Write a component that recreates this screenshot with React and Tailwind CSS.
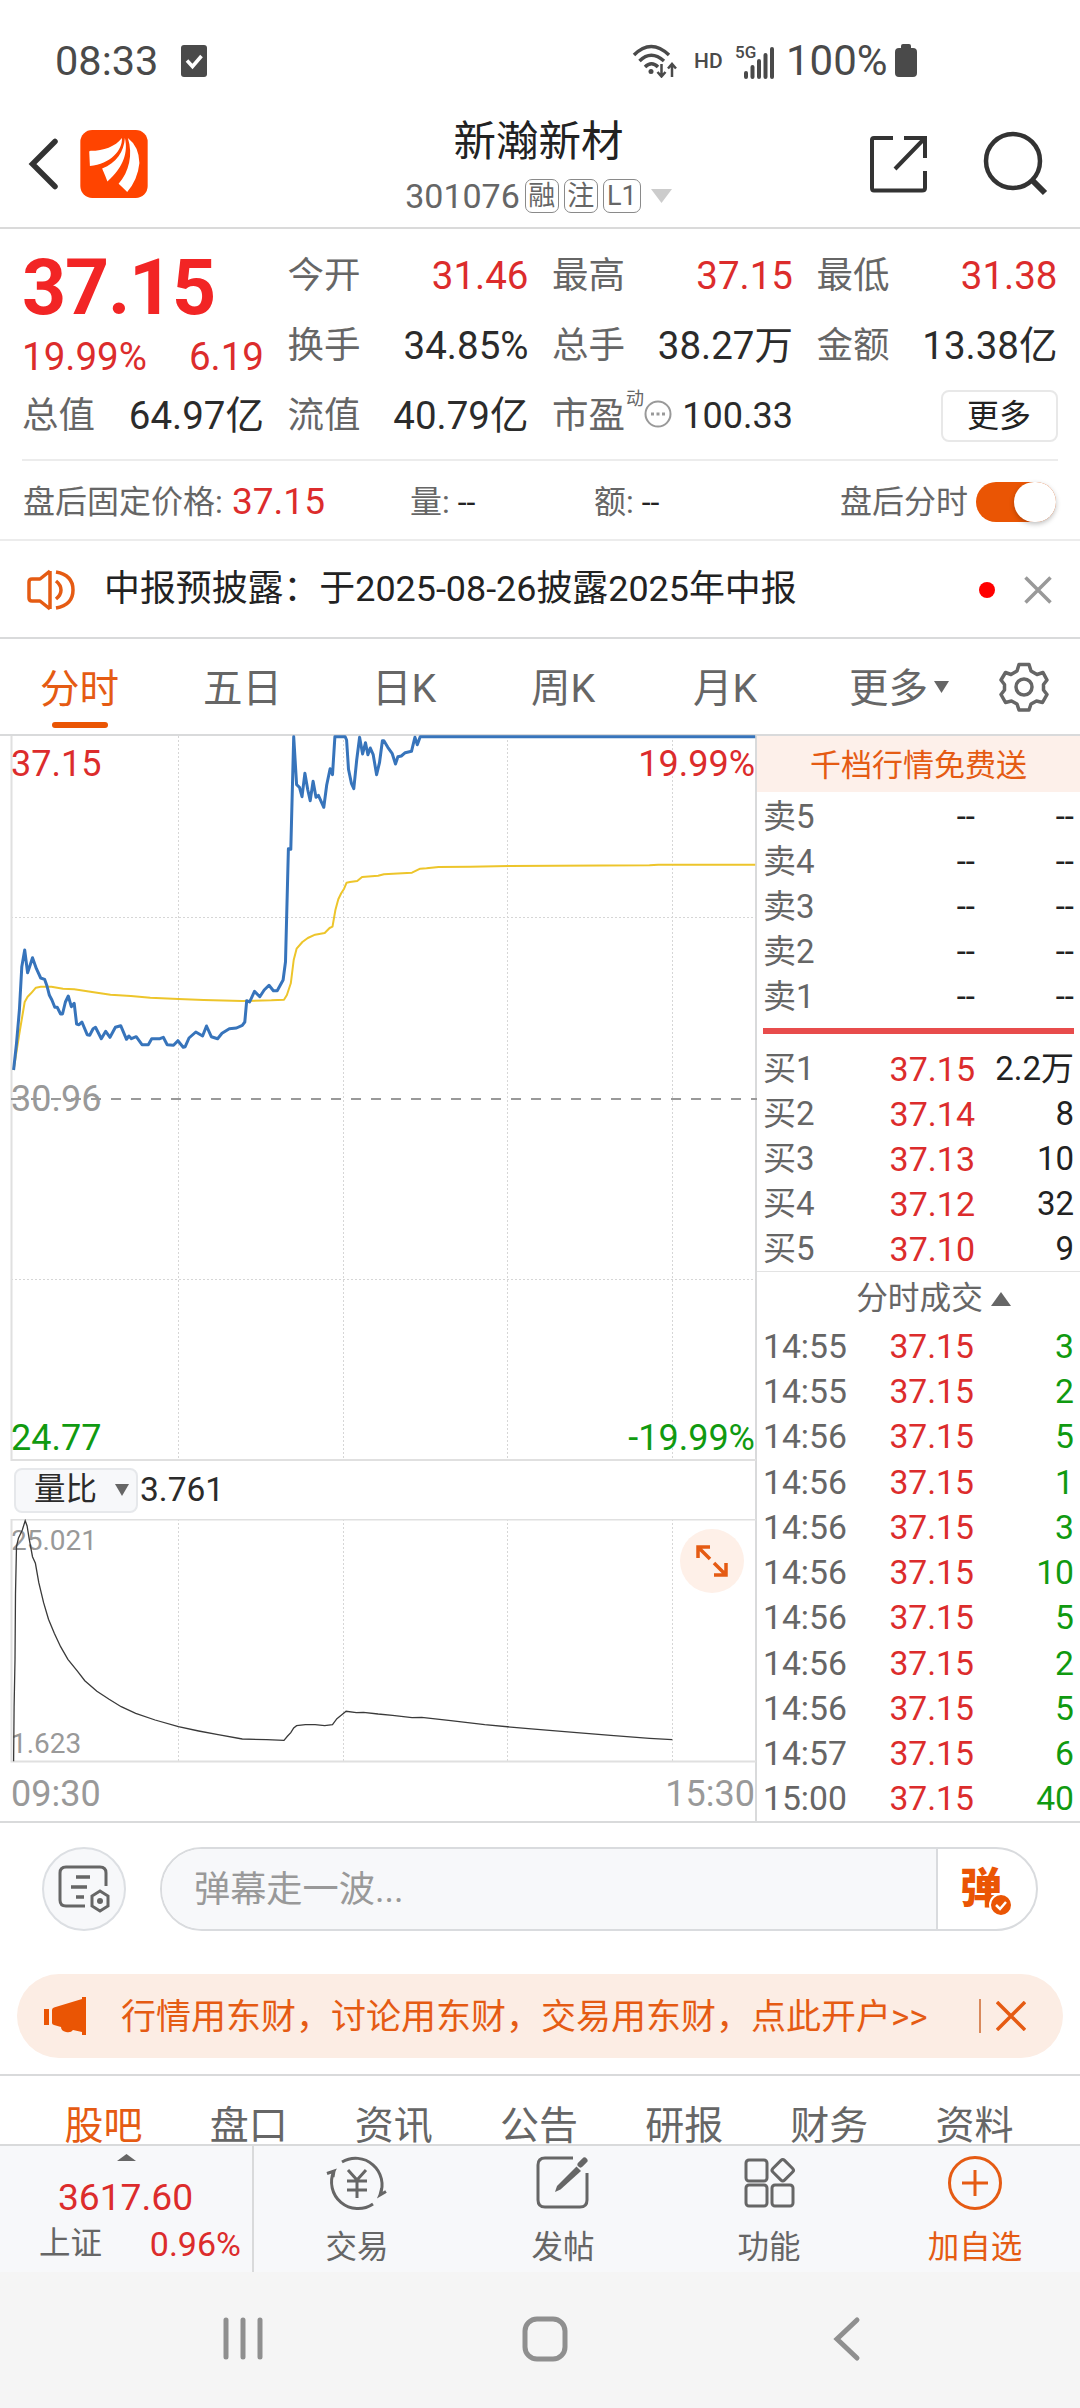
import React from "react";

const price = [
  [28,1020],[34,940],[40,840],[45,710],[51,660],[57,728],[62,706],[67,683],[75,716],[84,744],[92,748],[97,768],[102,796],[107,810],[113,832],[118,832],[125,852],[129,852],[135,816],[141,798],[147,830],[153,820],[158,882],[163,884],[169,876],[180,914],[185,916],[192,896],[197,892],[209,926],[218,904],[227,922],[238,892],[249,887],[261,928],[266,918],[271,926],[281,920],[293,944],[306,944],[313,926],[330,926],[337,922],[345,944],[358,946],[367,932],[378,952],[382,950],[390,924],[404,906],[418,918],[426,888],[436,920],[449,926],[458,910],[473,896],[488,894],[500,886],[505,876],[509,812],[515,816],[525,784],[536,800],[545,780],[555,766],[564,782],[572,782],[584,750],[589,695],[595,356],[600,358],[606,20],[612,164],[618,172],[623,200],[629,130],[635,180],[640,212],[646,154],[652,202],[657,196],[668,232],[674,165],[681,116],[686,134],[691,20],[712,20],[715,30],[719,118],[725,160],[730,176],[736,90],[742,22],[748,72],[754,38],[759,74],[764,54],[770,74],[777,134],[783,98],[789,32],[792,32],[800,52],[809,70],[816,102],[821,80],[828,78],[836,68],[849,64],[856,22],[861,44],[867,20],[1558,20],
];
const average = [
  [28,1020],[40,910],[51,816],[57,800],[64,790],[74,773],[84,770],[106,770],[130,776],[153,778],[190,786],[228,794],[270,798],[310,803],[368,807],[420,810],[500,813],[560,811],[586,809],[592,795],[600,760],[606,690],[612,656],[624,636],[635,624],[650,614],[670,609],[680,594],[686,590],[692,540],[698,508],[704,490],[710,476],[715,458],[722,456],[737,453],[747,441],[780,437],[792,433],[830,430],[850,428],[867,416],[880,415],[905,411],[970,410],[1050,408],[1340,406],[1358,404],[1558,404],
];
const ratio = [
  [28,1024],[29,860],[31,720],[32,520],[34,380],[38,355],[46,330],[52,302],[56,318],[60,355],[67,410],[73,430],[80,488],[90,548],[100,598],[112,640],[125,680],[140,718],[160,754],[175,782],[200,814],[225,838],[250,860],[280,880],[320,900],[368,920],[410,933],[450,944],[500,957],[550,959],[586,961],[593,949],[600,938],[606,924],[612,917],[630,914],[650,914],[670,917],[686,914],[695,896],[704,886],[714,874],[735,878],[750,877],[780,882],[810,886],[850,893],[870,892],[930,902],[1000,914],[1090,926],[1190,938],[1260,946],[1340,955],[1387,959],
];
const KX = 760 / 1568;
const toPoints = (list, dy) =>
  list.map(([x, y]) => `${(x * KX).toFixed(1)},${(y / 3 + dy).toFixed(1)}`).join(" ");

const Tri = ({ w, h, up, color }) => (
  <svg width={w} height={h} viewBox="0 0 20 20" preserveAspectRatio="none" className="shrink-0">
    <path d={up ? "M0 20L10 0L20 20Z" : "M0 0L20 0L10 20Z"} fill={color} />
  </svg>
);

function StatusBar() {
  return (
    <div className="flex h-[103px] shrink-0 items-center pt-[19px] pl-[55px] text-[#4a4a4a]">
      <span className="w-[126px] text-[41.500px] leading-none">08:33</span>
      <svg width="26" height="32" viewBox="0 0 26 32">
        <rect width="26" height="32" rx="3" fill="#4a4a4a" />
        <path d="M6 15.500l5.500 6L20.500 11" fill="none" stroke="#fff" strokeWidth="3.500" />
      </svg>
      <svg width="46" height="34" viewBox="0 0 46 34" className="ml-[425px]" fill="none" stroke="#4a4a4a">
        <path d="M2 11Q19-6 37 11" strokeWidth="3.500" />
        <path d="M7.500 17Q19 5.500 32 17" strokeWidth="3.500" />
        <path d="M13 23Q19.500 16.500 26 23" strokeWidth="3.500" />
        <circle cx="19" cy="27.500" r="2.500" fill="#4a4a4a" stroke="none" />
        <path d="M29.500 20V32M25.500 28l4 4.500 4-4.500M40 33V20M36 24.500l4-4.500 4 4.500" strokeWidth="2.500" />
      </svg>
      <span className="ml-[16px] w-[42px] text-[21px] font-medium leading-none">HD</span>
      <svg width="40" height="34" viewBox="0 0 40 34" className="overflow-visible">
        <text x="-1" y="14" fontSize="17" fontWeight="500" fill="#4a4a4a" fontFamily="Roboto, sans-serif">5G</text>
        <path d="M10 29v4M16.500 23v10M23 17v16M29.500 11v22M36 5v28" stroke="#4a4a4a" strokeWidth="4" strokeLinecap="round" />
      </svg>
      <span className="ml-[10px] text-[42px] leading-none">100%</span>
      <svg width="24" height="34" viewBox="0 0 24 34" className="ml-[6px]">
        <path d="M7 4V2q0-2 2-2h6q2 0 2 2v2h2q4 0 4 4v21q0 4-4 4H5q-4 0-4-4V8q0-4 4-4z" fill="#4a4a4a" />
      </svg>
    </div>
  );
}

const Badge = ({ children, wide }) => (
  <span className={(wide ? "w-[38px]" : "w-[34px]") + " flex h-[34px] items-center justify-center rounded-[7px] border border-[#8a8a8a] text-[27px] leading-none"}>
    {children}
  </span>
);

function Header() {
  return (
    <div className="flex h-[126px] shrink-0 items-start justify-between border-b-2 border-[#dadada] pr-[31px] pl-[28px]">
      <div className="flex w-[340px] pt-[27px]">
        <svg width="30" height="68" viewBox="0 0 30 68">
          <path d="M27 11.500L4.500 34L27 56.500" fill="none" stroke="#333" strokeWidth="5.500" strokeLinecap="round" />
        </svg>
        <svg width="68" height="68" viewBox="180 30 204 206" className="ml-[22px]">
          <rect x="180" y="30" width="204" height="206" rx="36" fill="#ff4400" />
          <path d="M306 54C308 92 272 132 209 139L207 96Q207 93 212 93C250 93 286 80 306 54Z" fill="#fff" />
          <path d="M315 54C325 96 312 142 262 186Q256 170 246 147C290 128 312 96 315 54Z" fill="#fff" />
          <path d="M324 54Q358 80 359 130Q354 180 322 218Q310 206 296 193C328 156 340 104 324 54Z" fill="#fff" />
        </svg>
      </div>
      <div className="flex flex-col items-center">
        <div className="mt-[14px] text-[42.500px] leading-[50px] text-[#222]">新瀚新材</div>
        <div className="mt-[11px] flex items-center gap-[5px] text-[#666]">
          <span className="text-[34px] leading-[36px]">301076</span>
          <Badge>融</Badge>
          <Badge>注</Badge>
          <Badge wide>L1</Badge>
          <span className="pl-[5px]"><Tri w={21} h={14} color="#ccc" /></span>
        </div>
      </div>
      <div className="flex w-[340px] justify-end gap-[54px] pt-[28px]">
        <svg width="60" height="62" viewBox="0 0 60 62" fill="none" stroke="#333" strokeWidth="4">
          <path d="M24 7H5Q3 7 3 9V57Q3 59.500 5 59.500H53Q56 59.500 56 57V40M56 27V7H35M55 8L26 38" />
        </svg>
        <svg width="66" height="66" viewBox="0 0 66 66" fill="none" stroke="#333" strokeWidth="4.500">
          <circle cx="30" cy="30" r="27" />
          <path d="M49 49L62 62" strokeWidth="6" />
        </svg>
      </div>
    </div>
  );
}

const Stat = ({ label, value, red }) => (
  <div className="flex h-[70px] items-center justify-between leading-none">
    <span className="text-[36.500px] text-[#666]">{label}</span>
    <span className={(red ? "text-[#dc2c2c]" : "text-[#2b2b2b]") + " text-[38.500px]"}>{value}</span>
  </div>
);

function Quote() {
  return (
    <div className="mx-[22px] grid h-[232px] shrink-0 grid-cols-[242px_241px_241px_241px] gap-x-[23.500px] border-b-2 border-[#ececec] pt-[12px] whitespace-nowrap">
      <div>
        <div className="flex h-[92px] items-center pt-[3px] text-[77px] font-bold leading-none tracking-[-1.200px] text-[#f22525]">37.15</div>
        <div className="flex h-[48px] items-center justify-between text-[38.500px] leading-none text-[#dc2c2c]">
          <span>19.99%</span>
          <span>6.19</span>
        </div>
        <Stat label="总值" value="64.97亿" />
      </div>
      <div>
        <Stat label="今开" value="31.46" red />
        <Stat label="换手" value="34.85%" />
        <Stat label="流值" value="40.79亿" />
      </div>
      <div>
        <Stat label="最高" value="37.15" red />
        <Stat label="总手" value="38.27万" />
        <div className="flex h-[70px] items-center leading-none">
          <span className="text-[36.500px] text-[#666]">市盈</span>
          <span className="mb-[34px] ml-[1px] text-[18px] text-[#666]">动</span>
          <svg width="28" height="28" viewBox="0 0 28 28" className="mb-[5px]">
            <circle cx="14" cy="14" r="12.500" fill="none" stroke="#999" strokeWidth="2" />
            <path d="M7 12.500h3v3H7zM12.500 12.500h3v3h-3zM18 12.500h3v3h-3z" fill="#999" />
          </svg>
          <span className="ml-auto text-[36px] text-[#2b2b2b]">100.33</span>
        </div>
      </div>
      <div>
        <Stat label="最低" value="31.38" red />
        <Stat label="金额" value="13.38亿" />
        <div className="flex h-[70px] items-center justify-end">
          <div className="flex h-[52px] w-[117px] items-center justify-center rounded-[8px] border-2 border-[#e8e8e8] text-[32px] leading-none text-[#222]">更多</div>
        </div>
      </div>
    </div>
  );
}

function AfterHours() {
  return (
    <div className="flex h-[80px] shrink-0 items-center border-b-2 border-[#ececec] pt-[3px] pr-[24px] pl-[23px] text-[32px] leading-none whitespace-nowrap text-[#666]">
      <span className="w-[209px]">盘后固定价格:</span>
      <span className="w-[178px] text-[37px] text-[#dc2c2c]">37.15</span>
      <span className="w-[184px]">量: <span className="text-[#222]">--</span></span>
      <span className="flex-1">额: <span className="text-[#222]">--</span></span>
      <span>盘后分时</span>
      <span className="ml-[8px] flex h-[40px] w-[80px] items-center justify-end rounded-full bg-[#ea5504]">
        <span className="h-[40px] w-[42px] rounded-full bg-white shadow-[0_2px_5px_rgba(0,0,0,0.25)]" />
      </span>
    </div>
  );
}

function News() {
  return (
    <div className="flex h-[98px] shrink-0 items-center border-b-2 border-[#d9dadb] pt-[2px] pr-[28px] pl-[27px]">
      <svg width="50" height="44" viewBox="0 0 50 44" fill="none" stroke="#e55b13" strokeWidth="3.500">
        <path d="M23 3v38M23 3L13 11H5Q2 11 2 14v16q0 3 3 3h8l10 8" strokeLinejoin="round" />
        <path d="M29 13q5 4 5 9t-5 9" />
        <path d="M29 4q17 3 17 18T29 40" />
      </svg>
      <span className="ml-[27px] text-[35.900px] leading-none whitespace-nowrap text-[#222]">中报预披露：于2025-08-26披露2025年中报</span>
      <span className="ml-auto size-[16px] rounded-full bg-[#f00]" />
      <svg width="28" height="28" viewBox="0 0 28 28" className="ml-[29px]">
        <path d="M1.500 1.500l25 25M26.500 1.500l-25 25" stroke="#999" strokeWidth="3.500" />
      </svg>
    </div>
  );
}

function PeriodTabs() {
  return (
    <div className="flex h-[97px] shrink-0 items-center border-b-2 border-[#d9dadb] text-[39.500px] leading-none whitespace-nowrap text-[#666]">
      <div className="ml-[40px] flex h-full w-[163px] flex-col text-[#e55b13]">
        <span className="mt-[31px]">分时</span>
        <span className="mt-[12px] ml-[12px] h-[6px] w-[56px] rounded-full bg-[#ea5504]" />
      </div>
      <span className="w-[169px] pt-[4px]">五日</span>
      <span className="w-[159px] pt-[4px]">日K</span>
      <span className="w-[162px] pt-[4px]">周K</span>
      <span className="w-[156px] pt-[4px]">月K</span>
      <span className="pt-[4px]">更多</span>
      <span className="ml-[6px] w-[65px]"><Tri w={15} h={12} color="#666" /></span>
      <svg width="50" height="50" viewBox="0 0 50 50" fill="none" stroke="#666" strokeWidth="3.500" strokeLinejoin="round">
        <path d="M20 2.500H30L32 9L38 12.500L44 10.500L48 18L44.500 22.500V28L48 32.500L43.500 40.500L37.500 39L32 42L30 48H20L18 42L12.500 39L6.500 40.500L2 32.500L5.500 28V22.500L2 18L6.500 10.500L12 12.500L18 9Z" />
        <circle cx="25" cy="25" r="8" />
      </svg>
    </div>
  );
}

const gridX = [178.5, 343.5, 507.5, 672.5];

function Charts() {
  return (
    <div className="w-[757px] shrink-0 border-r-2 border-[#d9dadb]">
      <div className="relative h-[725px]">
        <svg width="756" height="725" viewBox="0 736 756 725" className="block overflow-visible">
          <g stroke="#d6d6d6" strokeWidth="1" strokeDasharray="2 2">
            {gridX.map((x) => <path key={x} d={`M${x} 736V1460`} />)}
            <path d="M11 917.500H756M11 1279.500H756" />
          </g>
          <path d="M11.500 736V1460H756" fill="none" stroke="#e0e0e0" strokeWidth="2" />
          <polyline points={toPoints(average, 730)} fill="none" stroke="#edc52b" strokeWidth="2" strokeLinejoin="round" />
          <polyline points={toPoints(price, 730)} fill="none" stroke="#3774bb" strokeWidth="3" strokeLinejoin="round" />
        </svg>
        <div className="absolute top-0 right-0 left-[11px] flex h-[56px] items-center justify-between text-[36px] leading-none text-[#dc2c2c]">
          <span>37.15</span><span>19.99%</span>
        </div>
        <div className="absolute top-[345px] left-[11px] text-[36px] leading-[37px] text-[#999]">30.96</div>
        <svg width="746" height="4" viewBox="0 0 746 4" className="absolute top-[361px] left-[11px]">
          <path d="M0 2H746" stroke="#999" strokeWidth="2" strokeDasharray="10 10" />
        </svg>
        <div className="absolute right-0 bottom-[5px] left-[11px] flex h-[36px] items-center justify-between text-[36px] leading-none text-[#109a10]">
          <span>24.77</span><span>-19.99%</span>
        </div>
      </div>
      <div className="flex h-[58px] items-center pl-[14px] leading-none text-[#2b2b2b]">
        <div className="flex h-[45px] w-[124px] items-center justify-between rounded-[8px] border-2 border-[#e6e8eb] bg-[#f7f8fa] pr-[7px] pl-[18px] text-[31.500px]">
          量比
          <Tri w={14} h={12} color="#666" />
        </div>
        <span className="ml-[2px] text-[33.500px]">3.761</span>
      </div>
      <div className="relative h-[244px]">
        <div className="absolute top-[6px] left-[11px] text-[28px] leading-[32px] text-[#999]">25.021</div>
        <div className="absolute bottom-[3px] left-[11px] text-[28px] leading-[32px] text-[#999]">1.623</div>
        <svg width="756" height="244" viewBox="0 1519 756 244" className="relative block">
          <g stroke="#d6d6d6" strokeWidth="1" strokeDasharray="2 2">
            {gridX.map((x) => <path key={x} d={`M${x} 1519V1761`} />)}
          </g>
          <path d="M756 1519.500H11.500V1761.500H756" fill="none" stroke="#e0e0e0" strokeWidth="2" />
          <polyline points={toPoints(ratio, 1420)} fill="none" stroke="#3a3a3a" strokeWidth="1.300" />
        </svg>
        <div className="absolute top-[10px] right-[11px] flex size-[64px] items-center justify-center rounded-full bg-[#fef0e8]">
          <svg width="32" height="32" viewBox="0 0 32 32" fill="none" stroke="#e55b13" strokeWidth="3.500">
            <path d="M2 13V2H14M3 3l11 11M18 30H30V18M29 29L18 18" />
          </svg>
        </div>
      </div>
      <div className="flex h-[59px] items-center justify-between pt-[2px] pl-[11px] text-[36px] leading-none text-[#999]">
        <span>09:30</span><span>15:30</span>
      </div>
    </div>
  );
}

const asks = ["卖5", "卖4", "卖3", "卖2", "卖1"];
const bids = [
  ["买1", "37.15", "2.2万"],
  ["买2", "37.14", "8"],
  ["买3", "37.13", "10"],
  ["买4", "37.12", "32"],
  ["买5", "37.10", "9"],
];
const trades = [
  ["14:55", 3], ["14:55", 2], ["14:56", 5], ["14:56", 1], ["14:56", 3], ["14:56", 10],
  ["14:56", 5], ["14:56", 2], ["14:56", 5], ["14:57", 6], ["15:00", 40],
];

function OrderBook() {
  return (
    <div className="flex flex-1 flex-col text-[33px] leading-none whitespace-nowrap text-[#666]">
      <div className="flex h-[56px] items-center justify-center bg-[#fdf0ea] pt-[2px] text-[31px] text-[#e55b13]">千档行情免费送</div>
      <div className="flex flex-col px-[6px]">
        <div className="pt-[2px]">
          {asks.map((name) => (
            <div key={name} className="grid h-[45px] grid-cols-[70px_142px_1fr] items-center">
              <span>{name}</span>
              <span className="text-right text-[#222]">--</span>
              <span className="text-right text-[#222]">--</span>
            </div>
          ))}
        </div>
        <div className="mt-[9px] h-[6px] bg-[#e84c4c]" />
        <div className="mt-[12px]">
          {bids.map(([name, p, q]) => (
            <div key={name} className="grid h-[45px] grid-cols-[70px_142px_1fr] items-center">
              <span>{name}</span>
              <span className="text-right text-[34px] text-[#dc2c2c]">{p}</span>
              <span className="text-right text-[#222]">{q}</span>
            </div>
          ))}
        </div>
      </div>
      <div className="flex h-[53px] items-center justify-center gap-[8px] border-t border-[#e3e3e3] pt-[2px] pl-[30px] text-[31.700px]">
        分时成交
        <Tri w={20} h={14} up color="#666" />
      </div>
      <div className="-mb-[1px] flex flex-1 flex-col px-[6px] text-[33.700px]">
        {trades.map(([t, q], i) => (
          <div key={i} className="grid flex-1 grid-cols-[90px_121px_1fr] items-center">
            <span>{t}</span>
            <span className="text-right text-[#dc2c2c]">37.15</span>
            <span className="text-right text-[#109a10]">{q}</span>
          </div>
        ))}
      </div>
    </div>
  );
}

function CommentBar() {
  return (
    <div className="flex h-[134px] shrink-0 border-t-2 border-[#d9dadb] pt-[24px] pl-[42px]">
      <div className="flex size-[84px] items-center justify-center rounded-full border-2 border-[#dcdfe3] bg-[#f7f8fa]">
        <svg width="52" height="48" viewBox="0 0 52 48" fill="none" stroke="#666" strokeWidth="3">
          <path d="M27 41H8Q2 41 2 35V8Q2 2 8 2H42Q48 2 48 8V21" />
          <path d="M18 12H32M13 22H29M18 32H26" strokeWidth="3.500" />
          <path d="M42 26L50 31V41L42 46L34 41V31Z" />
          <circle cx="42" cy="36" r="3" fill="#666" stroke="none" />
        </svg>
      </div>
      <div className="ml-[34px] flex h-[84px] w-[878px] overflow-hidden rounded-full border-2 border-[#d9dbde]">
        <div className="flex flex-1 items-center bg-[#f7f8fa] pt-[2px] pl-[32px] text-[36.200px] leading-none text-[#999]">弹幕走一波...</div>
        <div className="relative flex w-[100px] items-center border-l-2 border-[#d9dbde] pl-[22px]">
          <span className="text-[42px] font-black leading-none text-[#ea5504]">弹</span>
          <svg width="24" height="24" viewBox="0 0 24 24" className="absolute top-[44px] left-[51px]">
            <circle cx="12" cy="12" r="11" fill="#ea5504" stroke="#fff" strokeWidth="2" />
            <path d="M7 12l4 4 6-7" fill="none" stroke="#fff" strokeWidth="2.500" />
          </svg>
        </div>
      </div>
    </div>
  );
}

function Promo() {
  return (
    <div className="mx-[17px] mt-[19px] flex h-[84px] shrink-0 items-center rounded-full bg-[#fcede4] pl-[27px] text-[#e55b13]">
      <svg width="44" height="38" viewBox="0 0 44 38" fill="#ea5504">
        <path d="M0 12h5v16H0zM8 13Q8 11 10 10.500L38 2V0h4v38h-4v-3l-9-2q-2 3-7 2t-5-5l-7-2Q8 27.500 8 26z" />
      </svg>
      <span className="ml-[33px] pt-[3px] text-[35px] leading-none whitespace-nowrap">行情用东财，讨论用东财，交易用东财，点此开户&gt;&gt;</span>
      <span className="ml-auto h-[34px] w-[2px] bg-[#d98a5c]" />
      <svg width="30" height="30" viewBox="0 0 30 30" className="mr-[37px] ml-[15px]">
        <path d="M1 1l28 28M29 1L1 29" stroke="#e55b13" strokeWidth="3.500" />
      </svg>
    </div>
  );
}

function SectionTabs() {
  return (
    <div className="mt-[16px] grid h-[70px] shrink-0 grid-cols-7 items-start border-t-2 border-[#d9dadb] pr-[33px] pl-[31px] pt-[31px] text-center text-[39px] leading-[39px] text-[#666]">
      {["股吧", "盘口", "资讯", "公告", "研报", "财务", "资料"].map((t, i) => (
        <span key={t} className={i === 0 ? "text-[#e55b13]" : ""}>{t}</span>
      ))}
    </div>
  );
}

const Action = ({ label, accent, children }) => (
  <div className={(accent ? "text-[#e55b13]" : "text-[#666]") + " flex flex-1 flex-col items-center"}>
    <svg width="64" height="56" viewBox="0 0 64 56" className="mt-[9px]" fill="none" stroke="currentColor" strokeWidth="3">{children}</svg>
    <span className="mt-[19px] text-[31.500px] leading-[36px]">{label}</span>
  </div>
);

function BottomBar() {
  return (
    <div className="flex h-[128px] shrink-0 border-t-2 border-[#d9dadb] bg-[#f7f8fa]">
      <div className="flex w-[254px] flex-col items-center border-r-2 border-[#d9dadb] leading-none">
        <div className="mt-[8px]"><Tri w={19} h={7} up color="#666" /></div>
        <div className="mt-[17px] pr-[1px] text-[37.200px] leading-[38px] text-[#dc2c2c]">3617.60</div>
        <div className="mt-[9px] flex w-full items-center justify-between pr-[11px] pl-[39px] leading-[38px]">
          <span className="text-[31.500px] text-[#666]">上证</span>
          <span className="text-[34px] text-[#dc2c2c]">0.96%</span>
        </div>
      </div>
      <div className="flex flex-1 pr-[2px]">
        <Action label="交易">
          <path d="M17 7A26.500 26.500 0 0 1 55 40L61 36.500M55 40L56.500 34" />
          <path d="M48 49A26.500 26.500 0 0 1 9 16L2 18.500M9 16L8 22" />
          <path d="M23 15l9 10 9-10M22 26H42M22 35H42M32 25V43" />
        </Action>
        <Action label="发帖">
          <path d="M42 3H14Q7 3 7 10V45Q7 52 14 52H49Q56 52 56 45V18" />
          <path d="M45.500 11.500L50 16L29.500 34.500L24 37L26 31Z" fill="currentColor" stroke="none" />
          <path d="M49.500 9.500L53.500 5.500" strokeWidth="6" strokeLinecap="round" />
        </Action>
        <Action label="功能">
          <rect x="9" y="5" width="21" height="21" rx="3" />
          <rect x="9" y="30" width="21" height="21" rx="3" />
          <rect x="35" y="30" width="21" height="21" rx="3" />
          <rect x="37.500" y="7" width="16.500" height="16.500" rx="2.500" transform="rotate(45 45.750 15.250)" />
        </Action>
        <Action label="加自选" accent>
          <circle cx="32" cy="28" r="25.500" />
          <path d="M32 15V41M19 28H45" />
        </Action>
      </div>
    </div>
  );
}

function SystemNav() {
  return (
    <div className="flex flex-1 items-start bg-[#f5f5f5] pt-[43px] pl-[221px]">
      <svg width="44" height="48" viewBox="0 0 44 48"><path d="M5 5V42M22 5V42M39 5V42" stroke="#8f8f8f" strokeWidth="5" strokeLinecap="round" /></svg>
      <svg width="48" height="48" viewBox="0 0 48 48" className="ml-[256px]"><rect x="4" y="4" width="40" height="40" rx="12" fill="none" stroke="#8f8f8f" strokeWidth="5" /></svg>
      <svg width="30" height="48" viewBox="0 0 30 48" className="ml-[263px]"><path d="M25 5L5 24L25 43" fill="none" stroke="#8f8f8f" strokeWidth="5" strokeLinecap="round" /></svg>
    </div>
  );
}

export default function App() {
  return (
    <div className="flex h-[2408px] w-[1080px] flex-col overflow-hidden bg-white font-[Roboto,'Noto_Sans_CJK_SC',sans-serif]">
      <StatusBar />
      <Header />
      <Quote />
      <AfterHours />
      <News />
      <PeriodTabs />
      <div className="flex h-[1085px] shrink-0">
        <Charts />
        <OrderBook />
      </div>
      <CommentBar />
      <Promo />
      <SectionTabs />
      <BottomBar />
      <SystemNav />
    </div>
  );
}
